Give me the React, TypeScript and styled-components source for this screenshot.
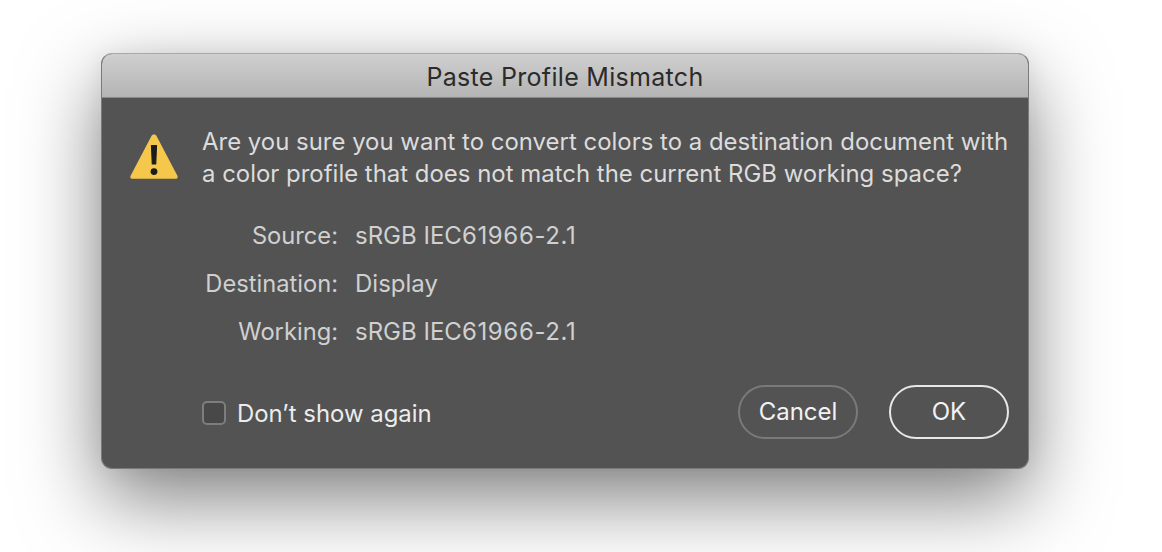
import React from "react";
import styled, { createGlobalStyle } from "styled-components";

const Global = createGlobalStyle`
  html, body { margin: 0; padding: 0; background: #fff; overflow: hidden; }
  body { font-family: Inter, "Noto Sans", "Liberation Sans", sans-serif; }
`;

const Page = styled.div`
  width: 1162px;
  height: 552px;
  box-sizing: border-box;
  padding: 53px 0 0 101px;
`;

const Dialog = styled.div`
  width: 928px;
  height: 416px;
  box-sizing: border-box;
  border-radius: 11px;
  background: #535353;
  border: 1px solid #7a7a7a;
  border-top-color: #a8a8a8;
  box-shadow: 0 30px 80px rgba(0, 0, 0, 0.5), 0 0 24px rgba(0, 0, 0, 0.06);
  display: flex;
  flex-direction: column;
  overflow: hidden;
`;

const TitleBar = styled.div`
  height: 44px;
  flex: none;
  box-sizing: border-box;
  background: linear-gradient(#cfcfcf, #b4b4b4);
  border-bottom: 1px solid #8a8a8a;
  padding-top: 2px;
  display: flex;
  align-items: center;
  justify-content: center;
  font-size: 25px;
  color: #2b2b2b;
  letter-spacing: 0.3px;
`;

const Body = styled.div`
  flex: 1;
  display: grid;
  grid-template-columns: 48px 1fr;
  column-gap: 24px;
  padding: 28px 19px 29px 28px;
`;

const IconCell = styled.div`
  padding-top: 8px;
`;

const Content = styled.div`
  display: flex;
  flex-direction: column;
  min-width: 0;
`;

const Message = styled.div`
  font-size: 23.95px;
  line-height: 32px;
  color: #dcdcdc;
  white-space: nowrap;
`;

const Details = styled.div`
  display: grid;
  grid-template-columns: 136px 1fr;
  column-gap: 17px;
  margin-top: 22px;
`;

const Label = styled.div`
  font-size: 23.7px;
  line-height: 48px;
  color: #d0d0d0;
  text-align: right;
  white-space: nowrap;
`;

const Value = styled.div`
  font-size: 24px;
  line-height: 48px;
  color: #d0d0d0;
  white-space: nowrap;
`;

const Digits = styled.span`
  letter-spacing: 0.65px;
`;

const Footer = styled.div`
  margin-top: auto;
  display: flex;
  align-items: center;
`;

const Check = styled.div`
  width: 20px;
  height: 20px;
  border: 2px solid #7d7d7d;
  border-radius: 5px;
  background: #484848;
  margin: 2px 11px 0 0;
`;

const CheckLabel = styled.div`
  font-size: 23.9px;
  color: #ececec;
  flex: 1;
  padding-top: 2px;
`;

const Button = styled.div<{ $primary?: boolean }>`
  width: 120px;
  height: 54px;
  box-sizing: border-box;
  border-radius: 27px;
  border: 2px solid ${(p) => (p.$primary ? "#e8e8e8" : "#7a7a7a")};
  color: #f2f2f2;
  font-size: 24px;
  padding-bottom: 2px;
  display: flex;
  align-items: center;
  justify-content: center;
  margin-left: ${(p) => (p.$primary ? "31px" : "0")};
`;

const Warning = () => (
  <svg width="48" height="46" viewBox="0 0 48 46">
    <path
      d="M24 0.6c1.2 0 2.1.6 2.8 1.8l20.6 39.4c.7 1.5-.1 3-1.8 3H2.4C.7 44.8-.1 43.3.6 41.800L21.200 2.400c.7-1.200 1.600-1.800 2.800-1.800z"
      fill="#f5c84c"
    />
    <path d="M21.500 11.500h5l-.8 18.500h-3.400z" fill="#1c1c1c" strokeLinejoin="round" stroke="#1c1c1c" strokeWidth="1.200" />
    <circle cx="24" cy="37.600" r="3.400" fill="#1c1c1c" />
  </svg>
);

export default function App() {
  return (
    <Page>
      <Global />
      <Dialog>
        <TitleBar>Paste Profile Mismatch</TitleBar>
        <Body>
          <IconCell>
            <Warning />
          </IconCell>
          <Content>
            <Message>
              Are you sure you want to convert colors to a destination document with
              <br />
              a color profile that does not match the current RGB working space?
            </Message>
            <Details>
              <Label>Source:</Label>
              <Value>sRGB IEC<Digits>61966-2.1</Digits></Value>
              <Label>Destination:</Label>
              <Value>Display</Value>
              <Label>Working:</Label>
              <Value>sRGB IEC<Digits>61966-2.1</Digits></Value>
            </Details>
            <Footer>
              <Check />
              <CheckLabel>Don’t show again</CheckLabel>
              <Button>Cancel</Button>
              <Button $primary>OK</Button>
            </Footer>
          </Content>
        </Body>
      </Dialog>
    </Page>
  );
}
